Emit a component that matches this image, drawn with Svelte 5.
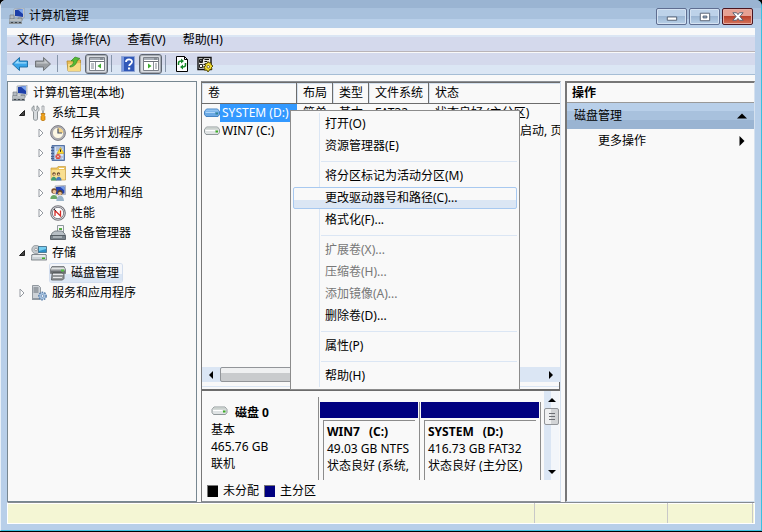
<script>
  const menus = ['文件(F)', '操作(A)', '查看(V)', '帮助(H)'];

  const tools = [
    { icon: 'back', label: '后退' },
    { icon: 'forward', label: '前进' },
    { separator: true },
    { icon: 'folder-up', label: '向上' },
    { icon: 'pane-left', label: '显示/隐藏控制台树', pressed: true },
    { separator: true },
    { icon: 'help', label: '帮助' },
    { icon: 'pane-right', label: '显示/隐藏操作窗格', pressed: true },
    { separator: true },
    { icon: 'refresh', label: '刷新' },
    { icon: 'settings', label: '设置' }
  ];

  const tree = [
    { level: 0, icon: 'computer', label: '计算机管理(本地)' },
    { level: 1, icon: 'tools', label: '系统工具', state: 'open' },
    { level: 2, icon: 'clock', label: '任务计划程序', state: 'closed' },
    { level: 2, icon: 'events', label: '事件查看器', state: 'closed' },
    { level: 2, icon: 'shared', label: '共享文件夹', state: 'closed' },
    { level: 2, icon: 'users', label: '本地用户和组', state: 'closed' },
    { level: 2, icon: 'performance', label: '性能', state: 'closed' },
    { level: 2, icon: 'devices', label: '设备管理器' },
    { level: 1, icon: 'storage', label: '存储', state: 'open' },
    { level: 2, icon: 'disk', label: '磁盘管理' },
    { level: 1, icon: 'services', label: '服务和应用程序', state: 'closed' }
  ];
  let selectedNode = $state('磁盘管理');

  const columns = ['卷', '布局', '类型', '文件系统', '状态'];
  const volumes = [
    { name: 'SYSTEM (D:)', layout: '简单', type: '基本', fs: 'FAT32', status: '状态良好 (主分区)' },
    { name: 'WIN7 (C:)', layout: '简单', type: '基本', fs: 'NTFS', status: '状态良好 (系统, 启动, 页面文件, 活动, 主分区)' }
  ];
  let selectedVolume = $state('SYSTEM (D:)');

  const contextMenu = [
    { label: '打开(O)' },
    { label: '资源管理器(E)' },
    { separator: true },
    { label: '将分区标记为活动分区(M)' },
    { label: '更改驱动器号和路径(C)...', active: true },
    { label: '格式化(F)...' },
    { separator: true },
    { label: '扩展卷(X)...', disabled: true },
    { label: '压缩卷(H)...', disabled: true },
    { label: '添加镜像(A)...', disabled: true },
    { label: '删除卷(D)...' },
    { separator: true },
    { label: '属性(P)' },
    { separator: true },
    { label: '帮助(H)' }
  ];

  const partitions = [
    { name: 'WIN7', letter: '(C:)', size: '49.03 GB NTFS', status: '状态良好 (系统,', share: 5 },
    { name: 'SYSTEM', letter: '(D:)', size: '416.73 GB FAT32', status: '状态良好 (主分区)', share: 6 }
  ];
</script>

{#snippet icon(name)}
  <svg class="icon" viewBox="0 0 16 16" aria-hidden="true">
    {#if name === 'computer'}
      <path d="M5 1 15 0v10L5 9z" fill="#d8dce0" stroke="#8b949c" stroke-width=".6" />
      <path d="M6 2 14 1v8L6 8z" fill="#1c3ea8" />
      <path d="M9 1.8 14 1v5z" fill="#7ea6ee" />
      <path d="M1 7h4v4H1zM9 10h4v2H9z" fill="#b4bac0" stroke="#6b7379" stroke-width=".6" />
      <path d="M0 11h13v2H0z" fill="#d5d9dc" stroke="#777f85" stroke-width=".6" />
      <path d="M0 13.5h13V16H0z" fill="#8c9399" />
      <path d="M2 14.500h2m2 0h2m2 0h2" stroke="#3f464b" />
    {:else if name === 'back'}
      <path d="M.5 8 7.500 1.500V5h8v6h-8v3.500z" fill="#38a5ea" stroke="#19699f" stroke-width=".9" />
      <path d="M2.500 7.600 6.500 3.800V6.200h8v1.400z" fill="#a3dcfa" />
    {:else if name === 'forward'}
      <path d="M15.500 8 8.500 1.500V5h-8v6h8v3.500z" fill="#9a9ea2" stroke="#6a6e72" stroke-width=".9" />
      <path d="M13.500 7.600 9.500 3.800V6.200h-8v1.400z" fill="#c6c9cc" />
    {:else if name === 'folder-up'}
      <path d="M1 5h4l1-1h8.500v11H2z" fill="#e9bd55" stroke="#b48a2b" stroke-width=".8" />
      <path d="m2 8 12.500-1v8H2z" fill="#f7da83" />
      <path d="M4 10c3-1 3.500-3 3.500-5H5L9 1l5 1.500-2.500 1.500c-1 4-3.500 7-7.500 7z" fill="#56bb35" stroke="#2b7d1e" stroke-width=".6" />
    {:else if name === 'pane-left' || name === 'pane-right'}
      <path d="M.5 1.500h15v13H.5z" fill="#fff" stroke="#7b8088" />
      <path d="M1 2h14v2H1z" fill="#a9afb8" />
      <path d="M11 3h3M1 5.500h14" stroke="#6b7078" />
      {#if name === 'pane-left'}
        <path d="M6.500 6v8" stroke="#8b9098" />
        <path d="M2 8h3m-3 2h3m-3 2h3" stroke="#7f858e" />
        <path d="M12 7.500v5L8.500 10z" fill="#3daa2f" />
      {:else}
        <path d="M10.500 6v8" stroke="#8b9098" />
        <path d="M12 8h2m-2 2h2m-2 2h2" stroke="#7f858e" />
        <path d="M5 7.500v5L8.500 10z" fill="#3daa2f" />
      {/if}
    {:else if name === 'help'}
      <path d="M1.500.5h13v15h-13z" fill="#3158b8" stroke="#8fa4d4" />
      <path d="M2 1h2v14H2z" fill="#7998df" />
      <path d="M6 6c0-3.500 6-3.500 6-.3 0 2.300-2.800 2.100-2.800 4.300" fill="none" stroke="#fff" stroke-width="1.800" />
      <path d="M8 11.500h2.200v2H8z" fill="#fff" />
    {:else if name === 'refresh'}
      <path d="M2.500.5h8l3 3v12h-11z" fill="#fff" stroke="#000" />
      <path d="M10.500.5v3h3" fill="none" stroke="#000" />
      <path d="M4.500 9V7c0-1 1-2 3-2M11.500 7v2c0 1-1 2-3 2" fill="none" stroke="#168b2b" stroke-width="1.500" />
      <path d="M7 2.500 10 5 7 7.500zM9 8.500v5L6 11z" fill="#168b2b" />
    {:else if name === 'settings'}
      <path d="M1 1.500h13v12H1z" fill="#e8e8e8" stroke="#111" stroke-width="1.400" />
      <path d="M2.500 3.500h3v3h-3zM2.500 8.500h3v3h-3z" fill="#fff" stroke="#222" />
      <path d="m3 4.500 1 1.500 2.500-4M7.500 3.500H12M7.500 5.500H10M6.500 8.500h2M6.500 11h2" fill="none" stroke="#111" stroke-width="1.200" />
      <path d="m11 5.500 1 1.500 2-.5v2l2 1.500-1.500 1.500.5 2-2-.2L11 16l-1.200-2-2.300.2.500-2L6.500 11l2-1-.5-2.500 2 .2z" fill="#f5e133" stroke="#4a3e00" stroke-width=".9" />
      <circle cx="11.300" cy="10.800" r="1.300" fill="#fff" stroke="#4a3e00" stroke-width=".7" />
    {:else if name === 'tools'}
      <path d="M3 .8v3.700l1.500 1L6 4.500V.8c3 2 2.400 5.200.5 6v7c0 2-4 2-4 0v-7C.3 5.800.3 2 3 .8z" fill="#d7dbde" stroke="#767d82" stroke-width=".8" />
      <path d="M11 1h2v4l-.5 1v3h-1V6L11 5z" fill="#eee" stroke="#858b90" stroke-width=".7" />
      <path d="M10 8.500h4l-.7 2 .7 1v3c0 1.500-4 1.500-4 0v-3l.7-1z" fill="#f2a51c" stroke="#b46b00" stroke-width=".7" />
    {:else if name === 'clock'}
      <circle cx="8" cy="8" r="7.400" fill="#b3b3b8" stroke="#737379" stroke-width=".9" />
      <circle cx="8" cy="8" r="5.600" fill="#fdf8e4" stroke="#8c8c93" stroke-width=".6" />
      <path d="M8 8V2.500a5.500 5.500 0 0 1 5.300 5.500z" fill="#f3d48b" />
      <path d="M8 3.500V8h4" fill="none" stroke="#46526b" stroke-width="1.200" />
    {:else if name === 'events'}
      <path d="M2 .5h12.500v15H2z" fill="#6f8dbe" stroke="#5674a6" />
      <path d="M4.500 1.500h9v13h-9z" fill="#d8e4f5" />
      <path d="M6 3h7M6 5h6M6 12h7M6 14h6" stroke="#8ca2c8" />
      <path d="M1 2.500h3m-3 3h3m-3 3h3m-3 3h3m-3 2h3" stroke="#4a628f" />
      <path d="m10.500 2.500 3.500 6H7z" fill="#ffdc2e" stroke="#c39a1d" stroke-width=".6" />
      <path d="M10.500 4.500v2.300" stroke="#222" />
      <circle cx="8" cy="11.500" r="2.600" fill="#d9473b" />
      <path d="m7 10.500 2 2m0-2-2 2" stroke="#fff" stroke-width=".8" />
    {:else if name === 'shared'}
      <path d="M1 3h6l1-1.500h7.500V15H1z" fill="#eec660" stroke="#c59c45" stroke-width=".7" />
      <path d="M1.500 5h13.500v9.500H1.500z" fill="#f9df91" />
      <path d="M9 3h5v1H9z" fill="#fff" />
      <circle cx="4" cy="9" r="1.700" fill="#5c4026" />
      <circle cx="8.500" cy="9" r="1.700" fill="#5c4026" />
      <circle cx="4.200" cy="9.600" r="1" fill="#efc397" />
      <circle cx="8.700" cy="9.600" r="1" fill="#efc397" />
      <path d="M1 15.500c0-5 5.500-5 5.500 0z" fill="#409b72" />
      <path d="M6 15.500c0-5 5.500-5 5.500 0z" fill="#4579bb" />
    {:else if name === 'users'}
      <path d="M5 1 15.500.5v9L6 10z" fill="#d2d6dc" stroke="#89909a" stroke-width=".6" />
      <path d="m6 2 8.500-.5v7L6 9z" fill="#2443b2" />
      <path d="m10 1.700 4.500-.2v4z" fill="#739be8" />
      <circle cx="4" cy="6" r="2.700" fill="#7b5130" />
      <circle cx="4.400" cy="6.800" r="1.800" fill="#efc397" />
      <circle cx="10" cy="7.500" r="2.600" fill="#634321" />
      <circle cx="10" cy="8.500" r="1.800" fill="#e7b887" />
      <path d="M.3 14c0-5.500 7.200-5.500 7.200 0z" fill="#68a866" />
      <path d="M6.300 16c0-7 7.700-7 7.700 0z" fill="#9bb5c9" />
    {:else if name === 'performance'}
      <circle cx="8" cy="8" r="7.300" fill="#e7e7ea" stroke="#76767c" stroke-width="1.100" />
      <circle cx="8" cy="8" r="5.700" fill="#fff" stroke="#606068" stroke-width=".8" />
      <path d="M5 11V5.500l5.500 5.500V5.500" fill="none" stroke="#d52b26" stroke-width="1.300" />
      <path d="m4 4 2 2" stroke="#333" />
    {:else if name === 'devices'}
      <path d="M7.500.5h6v9h-6z" fill="#f7f7f7" stroke="#8f979d" />
      <path d="M9 3h3v2H9z" fill="#57ad46" />
      <path d="m2 8 3-2h7l3 3v2H1z" fill="#b8bfc5" stroke="#5d666d" stroke-width=".7" />
      <path d="M.5 10.500h15v4H.5z" fill="#78828a" stroke="#495158" stroke-width=".8" />
      <path d="M3 12h9" stroke="#d7dce0" />
    {:else if name === 'storage'}
      <circle cx="5" cy="4.500" r="4.200" fill="#c5cace" stroke="#83898e" stroke-width=".7" />
      <circle cx="5" cy="4.500" r="1.300" fill="#fff" stroke="#777" stroke-width=".6" />
      <path d="M7.500 1.500h8v6h-8z" fill="#2a8fc7" stroke="#335f78" stroke-width=".7" />
      <path d="M8 2h7v2L8 6z" fill="#75cdf0" />
      <path d="M1 9.500h14l.7 2v3.500H.3v-3.500z" fill="#ccd2d6" stroke="#697177" stroke-width=".8" />
      <path d="M2 10.500h12v1H2z" fill="#fff" />
      <path d="M11 12.500h3v1.500h-3z" fill="#3eae2c" />
    {:else if name === 'disk'}
      <path d="M2 1.500h12l1.500 3v4H.5v-4z" fill="#b6b9bb" stroke="#65696c" stroke-width=".8" />
      <path d="M1.500 3.500h13" stroke="#e1e3e4" />
      <path d="M1 5.500h14v2.500H1z" fill="#6d7174" />
      <path d="M11 4.500h3v2h-3z" fill="#51c43f" />
      <path d="m2 9.500 1-2h9l2 2v4L12.500 15h-11z" fill="#94989a" stroke="#515456" stroke-width=".8" />
      <path d="M3 9.500h10M3 12.500h9" stroke="#e9eaeb" stroke-width="1.200" />
    {:else if name === 'services'}
      <path d="M1.500.5h6l2 2v12h-8z" fill="#cdd2d7" stroke="#7d858d" stroke-width=".8" />
      <path d="M2.500 3h5m-5 2h5m-5 2h5" stroke="#646d75" />
      <path d="M1 13h8v2H1z" fill="#929aa2" />
      <circle cx="11.500" cy="11" r="3.600" fill="#a8c3e0" stroke="#5c82ad" stroke-width="1.600" stroke-dasharray="1.600 1" />
      <circle cx="11.500" cy="11" r="2.800" fill="#a8c3e0" />
      <circle cx="11.500" cy="11" r="1.300" fill="#fff" stroke="#5c82ad" stroke-width=".7" />
    {/if}
  </svg>
{/snippet}

{#snippet drive(selected)}
  <svg class="drive" viewBox="0 0 16 10" aria-hidden="true">
    <path d="M2.500 1h11l2 2.500v3L14 8.500H2L.5 6.500v-3z" fill={selected ? '#6ba9e4' : '#dfe3e4'} stroke={selected ? '#3979bb' : '#858c8e'} stroke-width=".9" />
    <path d="M2.500 1.500h11l1.500 2H1z" fill={selected ? '#91c3f1' : '#cbd2ce'} />
    <path d="M1.500 4.500H11" stroke={selected ? '#b0d7f9' : '#fff'} />
    <path d="M11.500 4.500H14v2h-2.500z" fill={selected ? '#348599' : '#3cad28'} />
  </svg>
{/snippet}

{#snippet arrow(direction)}
  <svg class="arrow {direction}" viewBox="0 0 8 8" aria-hidden="true"><path d="M2 0v8l4-4z" /></svg>
{/snippet}

<div class="desktop">
  <div class="window">
    <header class="title-bar">
      {@render icon('computer')}
      <h1>计算机管理</h1>
      <div class="window-buttons">
        <button aria-label="最小化">
          <svg viewBox="0 0 30 16"><path d="M10.500 8.500h10v3.500h-10z" fill="#fff" stroke="#535e70" /></svg>
        </button>
        <button aria-label="最大化">
          <svg viewBox="0 0 30 16"><path d="M10.500 4.500h10v8h-10z" fill="#fff" stroke="#535e70" /><path d="M13.500 7.500h4v2h-4z" fill="#9ab8d6" stroke="#535e70" /></svg>
        </button>
        <button class="close" aria-label="关闭">
          <svg viewBox="0 0 30 16"><path d="M10 4h4l1.500 2L17 4h4l-3.500 4 3.500 4h-4l-1.500-2-1.500 2h-4l3.500-4z" fill="#fff" stroke="#535e70" /></svg>
        </button>
      </div>
    </header>

    <div class="client">
      <nav class="menu-bar">
        {#each menus as menu}
          <button>{menu}</button>
        {/each}
      </nav>

      <div class="toolbar" role="toolbar">
        {#each tools as tool}
          {#if tool.separator}
            <span class="tool-separator"></span>
          {:else}
            <button class:pressed={tool.pressed} aria-label={tool.label}>{@render icon(tool.icon)}</button>
          {/if}
        {/each}
      </div>

      <main>
        <ul class="tree">
          {#each tree as node}
            <li class="level-{node.level}">
              <span class="expander {node.state}">
                {#if node.state === 'open'}
                  <svg viewBox="0 0 8 8" aria-hidden="true"><path d="M6.500 1.500v5h-5z" fill="#444" stroke="#222" /></svg>
                {:else if node.state === 'closed'}
                  <svg viewBox="0 0 8 8" aria-hidden="true"><path d="M2 0v8l4-4z" fill="#fff" stroke="#969ba2" /></svg>
                {/if}
              </span>
              <button class:selected={selectedNode === node.label} onclick={() => (selectedNode = node.label)}>
                {@render icon(node.icon)}
                <span>{node.label}</span>
              </button>
            </li>
          {/each}
        </ul>

        <section class="disks">
          <div class="volume-list">
            <table>
              <thead>
                <tr>
                  {#each columns as column}
                    <th>{column}</th>
                  {/each}
                </tr>
              </thead>
              <tbody>
                {#each volumes as volume}
                  <tr onclick={() => (selectedVolume = volume.name)}>
                    <td class="name" class:selected={selectedVolume === volume.name}>
                      <div>
                        {@render drive(selectedVolume === volume.name)}
                        <span>{volume.name}</span>
                      </div>
                    </td>
                    <td>{volume.layout}</td>
                    <td>{volume.type}</td>
                    <td>{volume.fs}</td>
                    <td>{volume.status}</td>
                  </tr>
                {/each}
              </tbody>
            </table>
            <div class="scroll-x">
              <button aria-label="向左滚动">{@render arrow('left')}</button>
              <div class="track"><div class="thumb"></div></div>
              <button aria-label="向右滚动">{@render arrow('right')}</button>
            </div>
            <div class="splitter"></div>
          </div>

          <div class="disk-view">
            <div class="disk-row">
              <div class="disk-info">
                <strong>{@render drive(false)}磁盘 0</strong>
                <span>基本</span>
                <span>465.76 GB</span>
                <span>联机</span>
              </div>
              <div class="partitions">
                {#each partitions as part}
                  <div class="partition" style="flex-grow: {part.share}">
                    <div class="stripe"></div>
                    <div class="details">
                      <strong><span>{part.name}</span><span>{part.letter}</span></strong>
                      <span>{part.size}</span>
                      <span>{part.status}</span>
                    </div>
                  </div>
                {/each}
              </div>
              <div class="scroll-y">
                <button aria-label="向上滚动">{@render arrow('up')}</button>
                <div class="thumb"></div>
                <button aria-label="向下滚动">{@render arrow('down')}</button>
              </div>
            </div>
            <div class="legend">
              <span class="swatch unallocated"></span>未分配
              <span class="swatch primary"></span>主分区
            </div>
          </div>

          <div class="context-menu" role="menu">
            {#each contextMenu as item}
              {#if item.separator}
                <hr />
              {:else}
                <button role="menuitem" class:active={item.active} disabled={item.disabled}>{item.label}</button>
              {/if}
            {/each}
          </div>
        </section>

        <aside class="actions">
          <h2>操作</h2>
          <button class="group">磁盘管理 {@render arrow('up')}</button>
          <button class="more">更多操作 {@render arrow('right')}</button>
        </aside>
      </main>

      <footer>
        <span></span>
        <span></span>
        <span></span>
      </footer>
    </div>
  </div>
</div>

<style>
  :global(body) {
    margin: 0;
  }

  .desktop {
    height: 100vh;
    min-height: 480px;
    box-sizing: border-box;
    padding-bottom: 1px;
    background: #000;
    color: #000;
    font: 12px/16px "Noto Sans", "Noto Sans CJK SC", sans-serif;
  }

  .desktop * {
    box-sizing: border-box;
  }

  button {
    margin: 0;
    padding: 0;
    border: 0;
    background: none;
    color: inherit;
    font: inherit;
    white-space: nowrap;
  }

  .icon {
    display: block;
    flex: none;
    width: 16px;
    height: 16px;
  }

  .drive {
    flex: none;
    width: 16px;
    height: 10px;
  }

  .arrow {
    display: block;
    width: 8px;
    height: 8px;
  }

  .arrow.left {
    transform: rotate(180deg);
  }

  .arrow.up {
    transform: rotate(-90deg);
  }

  .arrow.down {
    transform: rotate(90deg);
  }

  .window {
    display: flex;
    flex-direction: column;
    height: 100%;
    padding: 0 6px 6px;
    border: solid #3ac0e0;
    border-width: 0 1px 1px 0;
    border-left: 1px solid #e8f0f8;
    border-radius: 6px 6px 0 0;
    background: #b8cfe9;
  }

  .title-bar {
    display: flex;
    flex: none;
    align-items: center;
    height: 28px;
    margin: 0 -6px;
    padding: 4px 8px 0;
    border-radius: 5px 5px 0 0;
    background: linear-gradient(#9ab4d2 8px, #a8c1dd 8px 19px, #b8cfe9 19px);
  }

  h1 {
    flex: 1;
    margin: 0 0 0 4px;
    font-size: 12px;
    font-weight: 400;
  }

  .window-buttons {
    display: flex;
    gap: 2px;
  }

  .window-buttons button {
    width: 31px;
    height: 17px;
    border: 1px solid #5f6e91;
    border-radius: 2px;
    background: linear-gradient(#bdd2e9 50%, #9cb6d3 50%, #b8d0e8);
    box-shadow: inset 0 0 0 1px #d4e2f2;
  }

  .window-buttons svg {
    display: block;
    width: 100%;
    height: 15px;
  }

  .window-buttons .close {
    border-color: #4b1520;
    background: linear-gradient(#e6a193 50%, #b9412c 50%, #d5745b);
    box-shadow: inset 0 0 0 1px #e5aca3;
  }

  .client {
    display: flex;
    flex: 1;
    flex-direction: column;
    min-height: 0;
    background: #f9f9f9;
  }

  .menu-bar {
    display: flex;
    flex: none;
    gap: 1px;
    height: 24px;
    padding-left: 2px;
    border-bottom: 1px solid #b9b4b8;
    background: linear-gradient(#f9f9f9 7px, #dbe6f4 7px 9px, #d4d9ec 9px);
  }

  .menu-bar button {
    padding: 0 8px;
  }

  .toolbar {
    display: flex;
    flex: none;
    align-items: center;
    height: 23px;
    padding: 0 1px;
    border-top: 1px solid #f9f9f9;
    border-bottom: 1px solid #a5bdd5;
    background: linear-gradient(#d4d9ec 12px, #dbe6f4 12px);
  }

  .toolbar button {
    display: grid;
    place-items: center;
    width: 23px;
    height: 20px;
  }

  .toolbar .pressed {
    border: 1px solid #5e6571;
    border-radius: 3px;
    background: #d9dce2;
    box-shadow: inset 0 0 0 1px #a7acb4;
  }

  .tool-separator {
    width: 1px;
    height: 17px;
    margin: 0 4px 0 3px;
    background: #8795aa;
  }

  main {
    display: flex;
    flex: 1;
    gap: 4px;
    min-height: 0;
    padding-top: 6px;
  }

  .tree {
    flex: 0 0 190px;
    margin: 0;
    padding: 1px 0 0 4px;
    border: 1px solid #778791;
    list-style: none;
    overflow: hidden;
  }

  .tree li {
    display: flex;
    align-items: center;
    height: 20px;
  }

  .level-0 .expander {
    display: none;
  }

  .level-1 {
    padding-left: 5px;
  }

  .level-2 {
    padding-left: 24px;
  }

  .expander {
    flex: none;
    width: 14px;
    padding-left: 1px;
  }

  .expander svg {
    display: block;
    width: 8px;
    height: 8px;
  }

  .tree button {
    display: flex;
    align-items: center;
    gap: 5px;
    height: 20px;
    padding: 0 3px 0 0;
  }

  .tree button.selected {
    height: 18px;
    border-radius: 2px;
    background: linear-gradient(#f4f6fa 55%, #dbe6f4 55%);
    box-shadow: 0 0 0 1px #d3deee;
  }

  .disks {
    position: relative;
    display: flex;
    flex: 1;
    flex-direction: column;
    min-width: 0;
    border: 1px solid #8b9096;
    border-right-color: #d5e1ef;
    border-left-color: #777;
  }

  .volume-list {
    display: flex;
    flex: 1;
    flex-direction: column;
    min-height: 0;
    border-top: 1px solid #6c6c6c;
    overflow: hidden;
  }

  table {
    width: 100%;
    table-layout: fixed;
    border-collapse: separate;
    border-spacing: 0;
  }

  th {
    height: 21px;
    padding: 0 0 0 6px;
    border-right: 1px solid #6c6c6c;
    border-bottom: 1px solid #6c6c6c;
    box-shadow: inset 1px 1px #d5e1ef;
    font-weight: 400;
    text-align: left;
    white-space: nowrap;
  }

  th:nth-child(1) {
    width: 95px;
  }

  th:nth-child(2),
  th:nth-child(3) {
    width: 36px;
  }

  th:nth-child(4) {
    width: 60px;
  }

  th:last-child {
    border-right: 0;
  }

  td {
    height: 18px;
    padding: 0 0 0 6px;
    overflow: hidden;
    white-space: nowrap;
  }

  td.name {
    padding: 0;
  }

  .name div {
    display: flex;
    align-items: center;
    padding-left: 2px;
  }

  .name span {
    flex: 1;
    height: 18px;
    padding-left: 2px;
    line-height: 18px;
  }

  .name.selected span {
    background: #39f;
    color: #fff;
  }

  .scroll-x {
    display: flex;
    flex: none;
    height: 15px;
    margin-top: auto;
    background: #dbe6f4;
  }

  .scroll-x button {
    display: grid;
    place-items: center;
    width: 18px;
  }

  .track {
    flex: 1;
  }

  .track .thumb {
    width: 45%;
    height: 15px;
    border: 1px solid #929599;
    border-radius: 2px;
    background: linear-gradient(#eff0f1 40%, #c9cbcd 40%);
  }

  .splitter {
    flex: none;
    height: 9px;
    border: solid #6c6c6c;
    border-width: 0 1px 2px 0;
    background: linear-gradient(#f9f9f9 4px, #dbe6f4 4px 5px, #f9f9f9 5px);
  }

  .disk-view {
    flex: none;
    height: 110px;
  }

  .disk-row {
    display: flex;
    height: 89px;
    overflow: hidden;
  }

  .disk-info {
    display: flex;
    flex: 0 0 116px;
    flex-direction: column;
    padding: 13px 0 0 9px;
    line-height: 17px;
  }

  .disk-info strong {
    display: flex;
    gap: 7px;
  }

  .disk-info .drive {
    width: 17px;
    margin-top: 2px;
  }

  .partitions {
    display: flex;
    flex: 1;
    min-width: 0;
    margin: 6px 3px 0 0;
    border-left: 1px solid #8c8c8c;
  }

  .partition {
    display: flex;
    flex: 1 1 0;
    flex-direction: column;
    min-width: 0;
    margin-top: 5px;
    border-right: 1px solid #8c8c8c;
  }

  .stripe {
    flex: none;
    height: 16px;
    margin: 0 1px;
    background: #000080;
  }

  .details {
    display: flex;
    flex: 1;
    flex-direction: column;
    margin: 2px 4px 0;
    padding: 2px 0 0 3px;
    border: solid #8c8c8c;
    border-width: 1px 0 0 1px;
    line-height: 17px;
    white-space: nowrap;
  }

  .details strong {
    display: flex;
    gap: 9px;
  }

  .scroll-y {
    display: flex;
    flex: 0 0 15px;
    flex-direction: column;
    align-items: center;
    margin-right: 1px;
    background: linear-gradient(90deg, #dbe6f4 50%, #f3f6fa 50%);
  }

  .scroll-y button {
    display: grid;
    place-items: center;
    height: 17px;
  }

  .scroll-y button:last-child {
    margin-top: auto;
  }

  .scroll-y .thumb {
    width: 15px;
    height: 17px;
    border: 1px solid #929599;
    border-radius: 2px;
    background: repeating-linear-gradient(#6d7075 0 1px, transparent 1px 3px) 4px 4px / 6px 9px no-repeat, linear-gradient(90deg, #eff0f1 50%, #d2d4d6 50%);
  }

  .legend {
    display: flex;
    align-items: center;
    gap: 5px;
    height: 21px;
    padding-left: 5px;
  }

  .swatch {
    width: 11px;
    height: 12px;
    border: 1px solid #777;
    border-width: 1px 0 0 1px;
  }

  .unallocated {
    background: #000;
  }

  .primary {
    background: #000080;
  }

  .context-menu {
    position: absolute;
    top: 28px;
    left: 88px;
    display: flex;
    flex-direction: column;
    width: 230px;
    padding: 2px;
    border: 1px solid #8c8c8c;
    background: linear-gradient(#dbe6f4, #dbe6f4) 28px 2px / 1px calc(100% - 4px) no-repeat, #f9f9f9;
  }

  .context-menu button {
    height: 22px;
    padding: 0 0 0 31px;
    border: 1px solid transparent;
    border-radius: 2px;
    text-align: left;
  }

  .context-menu button.active {
    border-color: #a8c9f0;
    background: linear-gradient(#f9f9f9 62%, #dbe6f4 62%);
  }

  .context-menu button:disabled {
    color: #777;
  }

  hr {
    height: 1px;
    margin: 4px 0 3px 28px;
    border: 0;
    background: #dbe6f4;
  }

  .actions {
    display: flex;
    flex: 0 0 190px;
    flex-direction: column;
    border: 2px solid #777;
    border-right: 1px solid #d5e1ef;
    border-bottom: 1px solid #d5e1ef;
  }

  h2 {
    height: 20px;
    margin: 0;
    padding-left: 5px;
    border-bottom: 1px solid #999;
    font-size: 12px;
    line-height: 19px;
  }

  .actions button {
    display: flex;
    align-items: center;
    justify-content: space-between;
    height: 26px;
    padding: 0 7px;
  }

  .actions .arrow {
    width: 10px;
    height: 10px;
  }

  .actions .group {
    background: linear-gradient(#b8cfe9 8px, #a8c1dd 8px 17px, #9ab4d2 17px);
  }

  .actions .more {
    height: 24px;
    padding-left: 31px;
  }

  footer {
    display: flex;
    flex: none;
    height: 22px;
    padding-right: 1px;
    border: 1px solid #fff;
    border-top: 1px solid #858a90;
    background: #f4f6d4;
    box-shadow: inset 0 1px #fff;
  }

  footer span {
    border-right: 1px solid #c8c8c8;
  }

  footer span:first-child {
    flex: 1;
  }

  footer span:nth-child(2) {
    width: 133px;
  }

  footer span:last-child {
    width: 85px;
  }
</style>
